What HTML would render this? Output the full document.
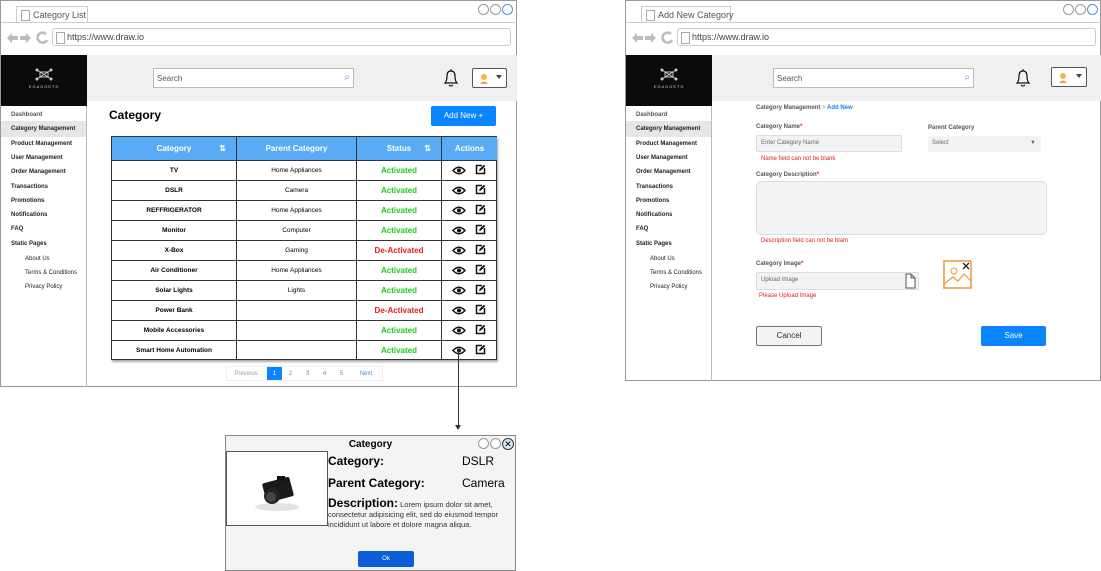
<!DOCTYPE html>
<html><head><meta charset="utf-8"><style>
*{box-sizing:border-box;margin:0;padding:0}
body{width:1101px;height:571px;position:relative;background:#fff;font-family:"Liberation Sans",Arial,sans-serif;overflow:hidden;color:#000}
.a{position:absolute}
.win{position:absolute;border:1px solid #999;background:#fff}
.tab{position:absolute;border:1px solid #ccc;border-bottom:none;background:#fff;font-size:9px;color:#555;padding:3px 4px 0 16px;height:16px;white-space:nowrap}
.tab:before{content:"";position:absolute;left:4px;top:3px;width:7px;height:9px;border:1px solid #aaa}
.url{position:absolute;border:1px solid #ccc;border-radius:3px;height:18px;font-size:9px;color:#444;padding:3px 0 0 14px;background:#fff}
.url:before{content:"";position:absolute;left:3px;top:3px;width:7px;height:10px;border:1px solid #aaa}
.circ{position:absolute;width:11px;height:11px;border:1px solid #999;border-radius:50%;background:#fff}
.sb div{position:absolute;left:10px;font-size:6px;font-weight:bold;color:#222;white-space:nowrap}
.search{position:absolute;border:1px solid #bbb;background:#fff;height:20px;font-size:8px;color:#555;padding:5px 3px}
.th{position:absolute;background:#5aabf5;color:#fff;font-size:8px;font-weight:bold;text-align:center;line-height:23px;border-right:1px solid #333;height:23px;top:0}
.cell{position:absolute;font-size:6.5px;text-align:center;line-height:19px;height:20px;border-right:1px solid #333;border-top:1px solid #333}
.g{color:#1ccd1c;font-weight:bold;font-size:8px}
.r{color:#e02020;font-weight:bold;font-size:8px}
.lbl{position:absolute;font-size:6px;color:#555;font-weight:bold}
.err{position:absolute;font-size:6px;color:#e02020}
.inp{position:absolute;background:#f1f3f5;border:1px solid #ddd;border-radius:2px;font-size:6px;color:#666;padding:4px 4px}
</style></head><body>

<!-- LEFT WINDOW -->
<div class="win" style="left:0;top:0;width:517px;height:387px">
 <div class="tab" style="left:15px;top:5px;width:72px">Category List</div>
 <div class="a" style="left:0;top:21px;width:516px;border-top:1px solid #ccc"></div>
 <div class="circ" style="left:477px;top:3px"></div><div class="circ" style="left:489px;top:3px"></div><div class="circ" style="left:501px;top:3px;border-color:#4a90d9"></div>
 <svg class="a" style="left:5px;top:30px" width="44" height="14" viewBox="0 0 44 14"><path d="M1 7 L6 2 V5 H12 V9 H6 V12Z M25 7 L20 2 V5 H14 V9 H20 V12Z" fill="#bbb"/><path d="M40 3 A5 5 0 1 0 41 9" fill="none" stroke="#bbb" stroke-width="2.5"/></svg>
 <div class="url" style="left:51px;top:27px;width:459px">https://www.draw.io</div>
 <div class="a" style="left:86px;top:54px;width:430px;height:46px;background:#f0f0f0"></div>
 <div class="a" style="left:0;top:54px;width:86px;height:51px;background:#0b0b0b"><svg class="a" style="left:34px;top:13px" width="18" height="13" viewBox="0 0 18 13"><path d="M2 2 L16 11 M16 2 L2 11 M5 4 H13 V9 H5Z" stroke="#ccc" fill="none"/><circle cx="2" cy="2" r="1.5" fill="#ccc"/><circle cx="16" cy="2" r="1.5" fill="#ccc"/><circle cx="2" cy="11" r="1.5" fill="#ccc"/><circle cx="16" cy="11" r="1.5" fill="#ccc"/></svg><div class="a" style="left:0;top:29px;width:86px;text-align:center;color:#ccc;font-size:4px;letter-spacing:1px">EGADGETS</div></div>
 <div class="a" style="left:85px;top:105px;height:281px;border-left:1px solid #bbb"></div>
 <div class="a" style="left:0;top:120px;width:85px;height:16px;background:#e6e6e6"></div>
 <div class="sb">
  <div style="top:111px;color:#555">Dashboard</div><div style="top:125px">Category Management</div><div style="top:140px">Product Management</div><div style="top:154px">User Management</div><div style="top:168px">Order Management</div><div style="top:183px">Transactions</div><div style="top:197px">Promotions</div><div style="top:211px">Notifications</div><div style="top:225px">FAQ</div><div style="top:240px">Static Pages</div>
  <div style="top:255px;left:24px;font-weight:normal">About Us</div><div style="top:269px;left:24px;font-weight:normal">Terms &amp; Conditions</div><div style="top:283px;left:24px;font-weight:normal">Privacy Policy</div>
 </div>
 <div class="search" style="left:152px;top:67px;width:201px">Search<span style="position:absolute;right:3px;top:3px;color:#4a90d9;font-size:10px">⌕</span></div>
 <svg class="a" style="left:441px;top:67px" width="18" height="20" viewBox="0 0 18 20"><path d="M3 15 Q5 13 5 8 Q5 3 9 3 Q13 3 13 8 Q13 13 15 15 Z M7 17 Q9 19 11 17" fill="none" stroke="#111" stroke-width="1.2"/><path d="M9 1 V3" stroke="#111"/></svg>
 <div class="a" style="left:471px;top:67px;width:35px;height:20px;border:1px solid #555;border-radius:2px;background:#fff"><svg class="a" style="left:6px;top:4px" width="10" height="11" viewBox="0 0 10 11"><circle cx="5" cy="4" r="3" fill="#f2b84b"/><path d="M1 11 Q5 6 9 11Z" fill="#e8a33c"/></svg><div class="a" style="left:23px;top:6px;width:0;height:0;border-left:3px solid transparent;border-right:3px solid transparent;border-top:4px solid #444"></div></div>
 <div class="a" style="left:108px;top:107px;font-size:12px;font-weight:bold">Category</div>
 <div class="a" style="left:430px;top:105px;width:65px;height:20px;background:#0a84ff;border-radius:2px;color:#fff;font-size:8px;text-align:center;line-height:20px">Add New +</div>
 <div class="a" style="left:110px;top:135px;width:386px;height:224px;border:1px solid #333;box-shadow:1px 2px 2px #aaa">
  <div class="th" style="left:0;width:125px">Category <span style="position:absolute;right:10px">⇅</span></div>
  <div class="th" style="left:125px;width:120px">Parent Category</div>
  <div class="th" style="left:245px;width:85px">Status <span style="position:absolute;right:10px">⇅</span></div>
  <div class="th" style="left:330px;width:55px;border:none">Actions</div>
  <div id="rows"></div>
 </div>
 <div class="a" style="left:225px;top:365px;height:15px;border:1px solid #eee;font-size:6px;color:#999;display:flex;line-height:14px">
  <span style="width:38px;text-align:center">Previous</span><span style="width:15px;background:#0a84ff;color:#fff;text-align:center;margin-left:2px">1</span><span style="width:17px;text-align:center;color:#4a90d9">2</span><span style="width:17px;text-align:center;color:#4a90d9">3</span><span style="width:17px;text-align:center;color:#4a90d9">4</span><span style="width:17px;text-align:center;color:#4a90d9">5</span><span style="width:32px;text-align:center;color:#4a90d9">Next</span>
 </div>
</div>
<div class="a" style="left:458px;top:350px;height:78px;border-left:1px solid #333"></div>
<div class="a" style="left:455px;top:425px;width:0;height:0;border-left:3px solid transparent;border-right:3px solid transparent;border-top:5px solid #333"></div>

<!-- RIGHT WINDOW -->
<div class="win" style="left:625px;top:0;width:476px;height:381px">
 <div class="tab" style="left:15px;top:5px;width:90px">Add New Category</div>
 <div class="a" style="left:0;top:21px;width:476px;border-top:1px solid #ccc"></div>
 <div class="circ" style="left:437px;top:3px"></div><div class="circ" style="left:449px;top:3px"></div><div class="circ" style="left:461px;top:3px;border-color:#4a90d9"></div>
 <svg class="a" style="left:5px;top:30px" width="44" height="14" viewBox="0 0 44 14"><path d="M1 7 L6 2 V5 H12 V9 H6 V12Z M25 7 L20 2 V5 H14 V9 H20 V12Z" fill="#bbb"/><path d="M40 3 A5 5 0 1 0 41 9" fill="none" stroke="#bbb" stroke-width="2.5"/></svg>
 <div class="url" style="left:51px;top:27px;width:419px">https://www.draw.io</div>
 <div class="a" style="left:86px;top:54px;width:390px;height:46px;background:#f0f0f0"></div>
 <div class="a" style="left:0;top:54px;width:86px;height:51px;background:#0b0b0b"><svg class="a" style="left:34px;top:13px" width="18" height="13" viewBox="0 0 18 13"><path d="M2 2 L16 11 M16 2 L2 11 M5 4 H13 V9 H5Z" stroke="#ccc" fill="none"/><circle cx="2" cy="2" r="1.5" fill="#ccc"/><circle cx="16" cy="2" r="1.5" fill="#ccc"/><circle cx="2" cy="11" r="1.5" fill="#ccc"/><circle cx="16" cy="11" r="1.5" fill="#ccc"/></svg><div class="a" style="left:0;top:29px;width:86px;text-align:center;color:#ccc;font-size:4px;letter-spacing:1px">EGADGETS</div></div>
 <div class="a" style="left:85px;top:105px;height:275px;border-left:1px solid #bbb"></div>
 <div class="a" style="left:0;top:120px;width:85px;height:16px;background:#e6e6e6"></div>
 <div class="sb">
  <div style="top:111px;color:#555">Dashboard</div><div style="top:125px">Category Management</div><div style="top:140px">Product Management</div><div style="top:154px">User Management</div><div style="top:168px">Order Management</div><div style="top:183px">Transactions</div><div style="top:197px">Promotions</div><div style="top:211px">Notifications</div><div style="top:225px">FAQ</div><div style="top:240px">Static Pages</div>
  <div style="top:255px;left:24px;font-weight:normal">About Us</div><div style="top:269px;left:24px;font-weight:normal">Terms &amp; Conditions</div><div style="top:283px;left:24px;font-weight:normal">Privacy Policy</div>
 </div>
 <div class="search" style="left:147px;top:67px;width:201px">Search<span style="position:absolute;right:3px;top:3px;color:#4a90d9;font-size:10px">⌕</span></div>
 <svg class="a" style="left:388px;top:67px" width="18" height="20" viewBox="0 0 18 20"><path d="M3 15 Q5 13 5 8 Q5 3 9 3 Q13 3 13 8 Q13 13 15 15 Z M7 17 Q9 19 11 17" fill="none" stroke="#111" stroke-width="1.2"/><path d="M9 1 V3" stroke="#111"/></svg>
 <div class="a" style="left:425px;top:66px;width:36px;height:20px;border:1px solid #555;border-radius:2px;background:#fff"><svg class="a" style="left:6px;top:4px" width="10" height="11" viewBox="0 0 10 11"><circle cx="5" cy="4" r="3" fill="#f2b84b"/><path d="M1 11 Q5 6 9 11Z" fill="#e8a33c"/></svg><div class="a" style="left:24px;top:6px;width:0;height:0;border-left:3px solid transparent;border-right:3px solid transparent;border-top:4px solid #444"></div></div>
 <div class="lbl" style="left:130px;top:104px">Category Management <span style="color:#aaa">&gt;</span> <span style="color:#0a84ff">Add New</span></div>
 <div class="lbl" style="left:130px;top:123px">Category Name<span style="color:#e02020">*</span></div>
 <div class="inp" style="left:130px;top:134px;width:146px;height:17px">Enter Category Name</div>
 <div class="err" style="left:135px;top:155px">Name field can not be blank</div>
 <div class="lbl" style="left:302px;top:124px">Parent Category</div>
 <div class="inp" style="left:302px;top:135px;width:113px;height:16px;border:none">Select<span style="position:absolute;right:5px">▼</span></div>
 <div class="lbl" style="left:130px;top:171px">Category Description<span style="color:#e02020">*</span></div>
 <div class="inp" style="left:130px;top:180px;width:291px;height:54px;border-radius:5px"></div>
 <div class="err" style="left:135px;top:237px">Description field can not be blam</div>
 <div class="lbl" style="left:130px;top:260px">Category Image<span style="color:#e02020">*</span></div>
 <div class="inp" style="left:130px;top:271px;width:163px;height:18px">Upload Image<svg style="position:absolute;right:2px;top:0px" width="11" height="16" viewBox="0 0 11 16"><path d="M1 1 H6 L10 5 V15 H1Z M6 1 V5 H10" fill="#fff" stroke="#555"/></svg></div>
 <div class="err" style="left:133px;top:292px">Please Upload Image</div>
 <svg class="a" style="left:317px;top:259px" width="29" height="29" viewBox="0 0 29 29"><rect x="1" y="1" width="27" height="27" fill="#fff" stroke="#f0953a" stroke-width="1.5"/><circle cx="11" cy="11" r="3" fill="none" stroke="#f0953a"/><path d="M1 24 L10 17 L15 21 L21 14 L28 21" fill="none" stroke="#f0953a" stroke-width="1.2"/><path d="M20 3 L26 9 M26 3 L20 9" stroke="#222" stroke-width="1.3"/></svg>
 <div class="a" style="left:130px;top:325px;width:66px;height:20px;border:1px solid #777;border-radius:2px;background:#f3f3f3;font-size:8px;color:#333;text-align:center;line-height:18px">Cancel</div>
 <div class="a" style="left:355px;top:325px;width:65px;height:20px;background:#0a84ff;border-radius:2px;color:#fff;font-size:8px;text-align:center;line-height:20px">Save</div>
</div>

<!-- DIALOG -->
<div class="a" style="left:225px;top:435px;width:291px;height:136px;border:1px solid #888;background:#f4f4f4">
 <div class="a" style="left:0;top:3px;width:100%;text-align:center;font-size:10px;font-weight:bold">Category</div>
 <div class="circ" style="left:252px;top:2px"></div><div class="circ" style="left:264px;top:2px"></div>
 <div class="a" style="left:276px;top:2px;width:12px;height:12px;border:1px solid #333;border-radius:50%;font-size:9px;line-height:10px;text-align:center;background:#dde8f5">✕</div>
 <div class="a" style="left:0;top:15px;width:102px;height:75px;border:1px solid #555;background:#fff">
  <svg width="100" height="73" viewBox="0 0 100 73"><ellipse cx="50" cy="55" rx="22" ry="4" fill="#e3e3e3"/><rect x="37" y="28" width="28" height="20" rx="2" fill="#1a1a1a" transform="rotate(-15 50 38)"/><circle cx="45" cy="44" r="8" fill="#222"/><circle cx="44" cy="45" r="5" fill="#3a4a50"/><rect x="50" y="24" width="8" height="5" fill="#111"/></svg>
 </div>
 <div class="a" style="left:102px;top:18px;font-size:12px;font-weight:bold">Category:</div>
 <div class="a" style="left:236px;top:18px;font-size:12px">DSLR</div>
 <div class="a" style="left:102px;top:40px;font-size:12px;font-weight:bold">Parent Category:</div>
 <div class="a" style="left:236px;top:40px;font-size:12px">Camera</div>
 <div class="a" style="left:102px;top:62px;width:188px;font-size:7.5px;line-height:10px;color:#333"><b style="font-size:12px;color:#000">Description:</b> Lorem ipsum dolor sit amet, consectetur adipisicing elit, sed do eiusmod tempor incididunt ut labore et dolore magna aliqua.</div>
 <div class="a" style="left:132px;top:115px;width:56px;height:16px;background:#0a5fd8;border-radius:2px;color:#fff;font-size:6px;text-align:center;line-height:16px">Ok</div>
</div>

<script>
var d=[["TV","Home Appliances",1],["DSLR","Camera",1],["REFFRIGERATOR","Home Appliances",1],["Monitor","Computer",1],["X-Box","Gaming",0],["Air Conditioner","Home Appliances",1],["Solar Lights","Lights",1],["Power Bank","",0],["Mobile Accessories","",1],["Smart Home Automation","",1]];
var h="";
var eye='<svg width="14" height="9" viewBox="0 0 14 9"><path d="M1 4.5 Q7 -2 13 4.5 Q7 11 1 4.5Z" fill="none" stroke="#111" stroke-width="1.4"/><circle cx="7" cy="4.5" r="2" fill="#111"/></svg>';
var ed='<svg width="11" height="11" viewBox="0 0 11 11"><path d="M7 1.5 H1.5 V9.5 H9.5 V4" fill="none" stroke="#111" stroke-width="1.5"/><path d="M4 7 L4.5 5 L9 0.8 L10.3 2 L6 6.5Z" fill="#111"/></svg>';
d.forEach(function(r,i){var t=23+i*20;
h+='<div class="cell" style="left:0;top:'+t+'px;width:125px;font-weight:bold">'+r[0]+'</div>';
h+='<div class="cell" style="left:125px;top:'+t+'px;width:120px">'+r[1]+'</div>';
h+='<div class="cell '+(r[2]?'g':'r')+'" style="left:245px;top:'+t+'px;width:85px">'+(r[2]?'Activated':'De-Activated')+'</div>';
h+='<div class="cell" style="left:330px;top:'+t+'px;width:55px;border-right:none"><span style="position:absolute;left:10px;top:5px;line-height:0">'+eye+'</span><span style="position:absolute;left:33px;top:3px;line-height:0">'+ed+'</span></div>';});
document.getElementById("rows").innerHTML=h;
</script>
</body></html>
